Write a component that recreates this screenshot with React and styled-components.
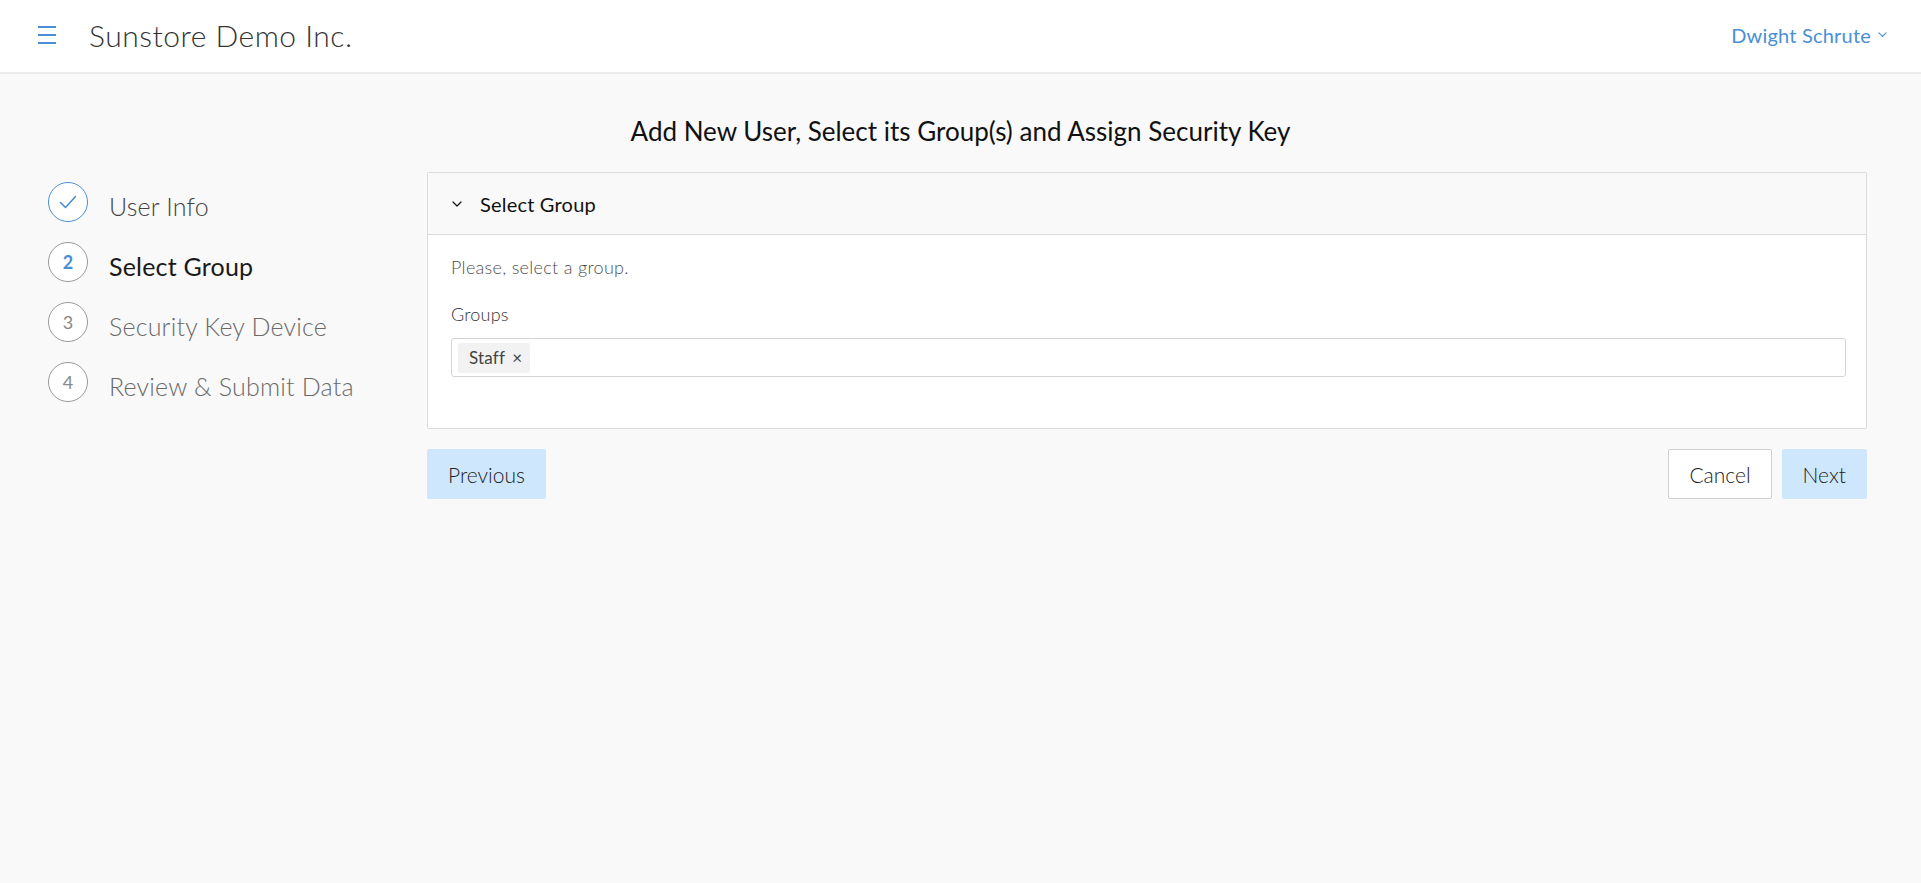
import React from 'react';
import styled, { createGlobalStyle } from 'styled-components';

const GlobalStyle = createGlobalStyle`
  html, body {
    margin: 0;
    padding: 0;
    background: #f9f9f9;
    font-family: 'Lato', 'Open Sans', sans-serif;
    color: #333;
  }
  * { box-sizing: border-box; }
`;

const steps = [
  { id: 1, label: 'User Info', state: 'done' },
  { id: 2, label: 'Select Group', state: 'active' },
  { id: 3, label: 'Security Key Device', state: 'todo' },
  { id: 4, label: 'Review & Submit Data', state: 'todo' },
];

const Page = styled.div`
  min-height: 883px;
  background: #f9f9f9;
`;

const TopBar = styled.header`
  height: 74px;
  background: #fff;
  border-bottom: 2px solid #ececec;
  display: flex;
  align-items: center;
  padding: 0 34px 3px 38px;
`;

const MenuButton = styled.button`
  border: 0;
  background: none;
  padding: 0;
  width: 20px;
  height: 18px;
  display: flex;
  flex-direction: column;
  justify-content: space-between;
  cursor: pointer;

  span {
    display: block;
    height: 2px;
    width: 18px;
    background: #4a8fd6;
  }
`;

const Brand = styled.h1`
  margin: 0 0 0 31px;
  font-size: 30px;
  font-weight: 300;
  color: #333;
  letter-spacing: 0.5px;
`;

const UserMenu = styled.div`
  margin-left: auto;
  display: flex;
  align-items: center;
  gap: 7px;
  color: #4a8fd6;
  font-size: 20px;
  font-weight: 400;
  letter-spacing: 0.2px;
`;

const Heading = styled.h2`
  margin: 0;
  padding: 22px 0 0;
  height: 98px;
  text-align: center;
  font-size: 26px;
  font-weight: 400;
  color: #111;
  line-height: 70px;
`;

const Body = styled.div`
  display: flex;
  padding: 0 54px 0 48px;
`;

const Steps = styled.ol`
  list-style: none;
  margin: 0;
  padding: 10px 0 0 0;
  width: 379px;
  flex-shrink: 0;
  display: flex;
  flex-direction: column;
  gap: 20px;
`;

const Step = styled.li`
  display: flex;
  align-items: center;
  gap: 21px;
  height: 40px;
  font-size: 25px;
  letter-spacing: 0.2px;
  font-weight: ${p => (p.$state === 'active' ? 400 : 300)};
  color: ${p => (p.$state === 'active' ? '#1a1a1a' : p.$state === 'done' ? '#444' : '#6a6a6a')};
`;

const StepLabel = styled.span`
  padding-top: 8px;
`;

const Circle = styled.span`
  width: 40px;
  height: 40px;
  border-radius: 50%;
  flex-shrink: 0;
  border: 1px solid ${p => (p.$state === 'done' ? '#4a8fd6' : '#9a9a9a')};
  background: #fff;
  display: flex;
  align-items: center;
  justify-content: center;
  font-size: 18px;
  letter-spacing: 0;
  font-weight: ${p => (p.$state === 'active' ? 700 : 400)};
  color: ${p => (p.$state === 'active' ? '#4a8fd6' : '#888')};
`;

const Main = styled.div`
  flex: 1;
`;

const Panel = styled.section`
  border: 1px solid #dcdcdc;
  border-radius: 2px;
  background: #fff;
`;

const PanelHeader = styled.div`
  height: 62px;
  background: #f9f9f9;
  border-bottom: 1px solid #dcdcdc;
  display: flex;
  align-items: center;
  gap: 18px;
  padding-left: 24px;
  font-size: 20px;
  letter-spacing: 0.2px;
  color: #111;
`;

const PanelBody = styled.div`
  padding: 20px 20px 51px 23px;
`;

const Hint = styled.p`
  margin: 0 0 23px;
  font-size: 18px;
  letter-spacing: 0.3px;
  font-weight: 300;
  color: #4f4f4f;
  line-height: 24px;
`;

const Label = styled.label`
  display: block;
  font-size: 18px;
  letter-spacing: 0.2px;
  font-weight: 300;
  color: #333;
  margin-bottom: 12px;
  line-height: 24px;
`;

const TagInput = styled.div`
  height: 39px;
  border: 1px solid #d4d4d4;
  border-radius: 3px;
  padding: 4px 6px;
  display: flex;
  align-items: center;
`;

const Tag = styled.span`
  height: 30px;
  display: inline-flex;
  align-items: center;
  gap: 7px;
  padding: 0 8px 0 11px;
  background: #f2f2f2;
  border-radius: 2px;
  font-size: 17px;
  letter-spacing: 0.2px;
  color: #444;
`;

const Actions = styled.div`
  display: flex;
  align-items: center;
  gap: 10px;
  margin-top: 20px;
`;

const Button = styled.button`
  height: 50px;
  padding: 0 20px;
  font-family: inherit;
  font-size: 21px;
  font-weight: 300;
  color: #222;
  border-radius: 2px;
  border: 1px solid ${p => (p.$variant === 'ghost' ? '#d0d0d0' : '#cfe7fd')};
  background: ${p => (p.$variant === 'ghost' ? '#fff' : '#cfe7fd')};
  cursor: pointer;
`;

const Spacer = styled.div`
  flex: 1;
`;

function Check() {
  return (
    <svg width="18" height="14" viewBox="0 0 18 14" fill="none">
      <path d="M1.5 7.5 L6.5 12.5 L16.5 1.5" stroke="#4a8fd6" strokeWidth="1.6" strokeLinecap="round" strokeLinejoin="round" />
    </svg>
  );
}

function Chevron({ color = '#111', size = 10 }) {
  return (
    <svg width={size} height={size * 0.6} viewBox="0 0 10 6" fill="none">
      <path d="M1 1 L5 5 L9 1" stroke={color} strokeWidth="1.2" strokeLinecap="round" strokeLinejoin="round" />
    </svg>
  );
}

export default function App() {
  return (
    <Page>
      <GlobalStyle />
      <TopBar>
        <MenuButton aria-label="menu">
          <span />
          <span />
          <span />
        </MenuButton>
        <Brand>Sunstore Demo Inc.</Brand>
        <UserMenu>
          Dwight Schrute
          <Chevron color="#4a8fd6" size={9} />
        </UserMenu>
      </TopBar>

      <Heading>Add New User, Select its Group(s) and Assign Security Key</Heading>

      <Body>
        <Steps>
          {steps.map(step => (
            <Step key={step.id} $state={step.state}>
              <Circle $state={step.state}>{step.state === 'done' ? <Check /> : step.id}</Circle>
              <StepLabel>{step.label}</StepLabel>
            </Step>
          ))}
        </Steps>

        <Main>
          <Panel>
            <PanelHeader>
              <Chevron />
              Select Group
            </PanelHeader>
            <PanelBody>
              <Hint>Please, select a group.</Hint>
              <Label>Groups</Label>
              <TagInput>
                <Tag>Staff <span>×</span></Tag>
              </TagInput>
            </PanelBody>
          </Panel>
          <Actions>
            <Button>Previous</Button>
            <Spacer />
            <Button $variant="ghost">Cancel</Button>
            <Button>Next</Button>
          </Actions>
        </Main>
      </Body>
    </Page>
  );
}
